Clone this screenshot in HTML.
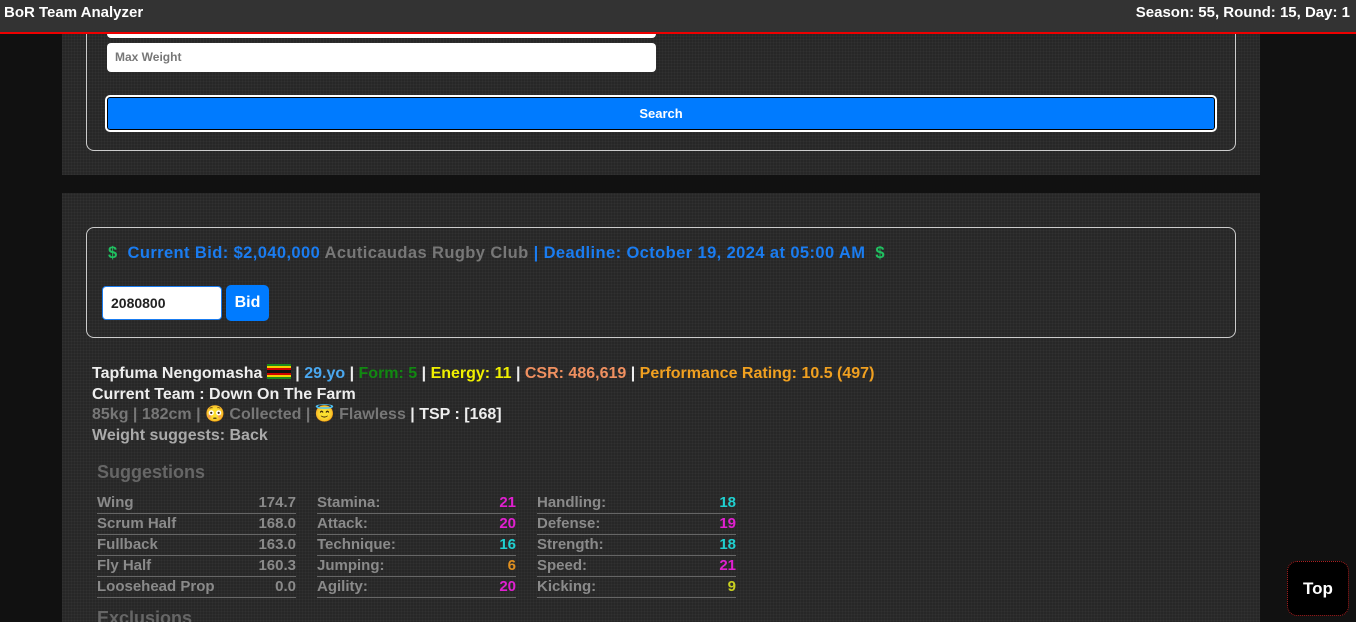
<!DOCTYPE html>
<html><head><meta charset="utf-8"><style>
*{box-sizing:border-box;margin:0;padding:0}
html,body{width:1356px;height:622px;overflow:hidden}
body{background:#111;font-family:"Liberation Sans",sans-serif;font-weight:bold;position:relative}
.hdr{position:absolute;left:0;top:0;width:1356px;height:34px;background:#333;border-bottom:2px solid #e00;color:#fff;font-size:15px;z-index:5}
.hdr .l{position:absolute;left:4px;top:4px}
.hdr .r{position:absolute;right:6px;top:4px}
.card{position:absolute;left:62px;width:1198px;background:#272727;background-image:repeating-linear-gradient(0deg,rgba(255,255,255,.025) 0 1px,transparent 1px 3px),repeating-linear-gradient(90deg,rgba(255,255,255,.025) 0 1px,transparent 1px 3px)}
.box{position:absolute;border:1px solid #ccc;border-radius:8px}
.inp{position:absolute;background:#fff;border-radius:4px;font-size:11px;color:#777;padding:8px}
.btn{position:absolute;background:#007bff;color:#fff;border-radius:5px;text-align:center}
.info{position:absolute;left:92px;top:364px;font-size:16px;line-height:20.5px;color:#eee;white-space:nowrap}
.g{color:#777}
table{position:absolute;border-collapse:collapse;font-size:15px;color:#8a8a8a}
td{height:21px;border-bottom:1px solid #666;padding:0;line-height:19px}
td.v{text-align:right}
.m{color:#e020d0}.c{color:#20d0d0}.o{color:#e09020}.y{color:#c8d020}
</style></head><body>
<div class="hdr"><span class="l">BoR Team Analyzer</span><span class="r">Season: 55, Round: 15, Day: 1</span></div>
<div class="card" style="top:0;height:175px">
 <div class="box" style="left:24px;top:10px;width:1150px;height:141px;border-top:none;border-radius:0 0 8px 8px"></div>
 <div class="inp" style="left:45px;top:28px;width:549px;height:10px;padding:0"></div>
 <div class="inp" style="left:45px;top:43px;width:549px;height:29px;font-size:12px;padding:7px 8px">Max Weight</div>
 <div class="btn" style="left:43px;top:95px;width:1112px;height:37px;border:2px solid #fff;box-shadow:inset 0 0 0 1px #000;font-size:13px;line-height:33px">Search</div>
</div>
<div class="card" style="top:193px;height:440px">
 <div class="box" style="left:24px;top:34px;width:1150px;height:111px"></div>
 <div style="position:absolute;left:46px;top:51px;font-size:16.5px;letter-spacing:0.4px;color:#1a7cf0;white-space:nowrap"><span style="color:#20c060">$</span>&nbsp; Current Bid: $2,040,000 <span class="g">Acuticaudas Rugby Club</span> | Deadline: October 19, 2024 at 05:00 AM &nbsp;<span style="color:#20c060">$</span></div>
 <div class="inp" style="left:40px;top:93px;width:120px;height:34px;border:1px solid #1a7cf0;color:#222;font-size:14px;padding:8px 8px">2080800</div>
 <div class="btn" style="left:164px;top:92px;width:43px;height:36px;font-size:16px;line-height:36px">Bid</div>
</div>
<div class="info">
<div>Tapfuma Nengomasha <span style="display:inline-block;width:24px;height:15px;vertical-align:-1px;background:linear-gradient(#1a8a1a 0 2px,#f0d000 2px 4px,#c00 4px 6px,#111 6px 9px,#c00 9px 11px,#f0d000 11px 13px,#1a8a1a 13px)"></span> | <span style="color:#4aa8f0">29.yo</span> | <span style="color:#118811">Form: 5</span> | <span style="color:#f0f000">Energy: 11</span> | <span style="color:#f09060">CSR: 486,619</span> | <span style="color:#f0a020">Performance Rating: 10.5 (497)</span></div>
<div>Current Team : Down On The Farm</div>
<div><span class="g">85kg | 182cm | <span style="color:#f0a030">😳</span> Collected | <span style="color:#f0a030">😇</span> Flawless</span> | TSP : [168]</div>
<div style="color:#aaa">Weight suggests: Back</div>
</div>
<div style="position:absolute;left:97px;top:462px;font-size:18px;color:#666">Suggestions</div>
<table style="left:97px;top:492px;width:199px"><tr><td>Wing</td><td class="v">174.7</td></tr><tr><td>Scrum Half</td><td class="v">168.0</td></tr><tr><td>Fullback</td><td class="v">163.0</td></tr><tr><td>Fly Half</td><td class="v">160.3</td></tr><tr><td>Loosehead Prop</td><td class="v">0.0</td></tr></table>
<table style="left:317px;top:492px;width:199px"><tr><td>Stamina:</td><td class="v m">21</td></tr><tr><td>Attack:</td><td class="v m">20</td></tr><tr><td>Technique:</td><td class="v c">16</td></tr><tr><td>Jumping:</td><td class="v o">6</td></tr><tr><td>Agility:</td><td class="v m">20</td></tr></table>
<table style="left:537px;top:492px;width:199px"><tr><td>Handling:</td><td class="v c">18</td></tr><tr><td>Defense:</td><td class="v m">19</td></tr><tr><td>Strength:</td><td class="v c">18</td></tr><tr><td>Speed:</td><td class="v m">21</td></tr><tr><td>Kicking:</td><td class="v y">9</td></tr></table>
<div style="position:absolute;left:97px;top:608px;font-size:18px;color:#666">Exclusions</div>
<div style="position:absolute;left:1287px;top:561px;width:62px;height:55px;background:#000;border:1px dotted #a22;border-radius:10px;color:#fff;font-size:17px;text-align:center;line-height:53px">Top</div>
</body></html>
